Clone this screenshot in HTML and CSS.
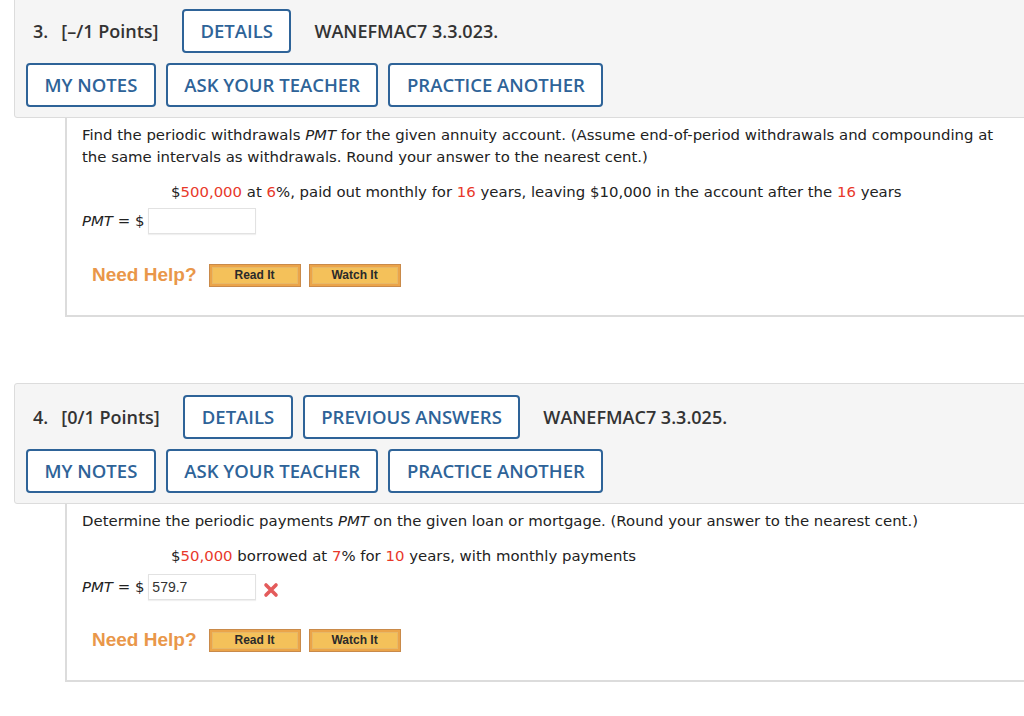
FILE: index.html
```html
<!DOCTYPE html>
<html lang="en">
<head>
<meta charset="utf-8">
<title>Questions</title>
<link rel="stylesheet" href="styles.css">
</head>
<body>
<div class="panel panel-first">
  <div class="head">
    <div class="row">
      <span class="qtitle"><span class="qnum">3.</span>[–/1 Points]</span>
      <button class="btn">DETAILS</button>
      <span class="qcode">WANEFMAC7 3.3.023.</span>
    </div>
    <div class="row">
      <button class="btn">MY NOTES</button>
      <button class="btn">ASK YOUR TEACHER</button>
      <button class="btn">PRACTICE ANOTHER</button>
    </div>
  </div>
  <div class="content">
    <p class="prompt">Find the periodic withdrawals <i>PMT</i> for the given annuity account. (Assume end-of-period withdrawals and compounding at the same intervals as withdrawals. Round your answer to the nearest cent.)</p>
    <p class="given">$<span class="red">500,000</span> at <span class="red">6</span>%, paid out monthly for <span class="red">16</span> years, leaving $10,000 in the account after the <span class="red">16</span> years</p>
    <div class="answer">
      <span class="label"><i>PMT</i> = $</span>
      <span class="field"></span>
    </div>
    <div class="help">
      <span class="need">Need Help?</span>
      <button class="hbtn">Read It</button>
      <button class="hbtn">Watch It</button>
    </div>
  </div>
</div>

<div class="panel panel-next">
  <div class="head">
    <div class="row">
      <span class="qtitle"><span class="qnum">4.</span>[0/1 Points]</span>
      <button class="btn">DETAILS</button>
      <button class="btn">PREVIOUS ANSWERS</button>
      <span class="qcode">WANEFMAC7 3.3.025.</span>
    </div>
    <div class="row">
      <button class="btn">MY NOTES</button>
      <button class="btn">ASK YOUR TEACHER</button>
      <button class="btn">PRACTICE ANOTHER</button>
    </div>
  </div>
  <div class="content content-2">
    <p class="prompt">Determine the periodic payments <i>PMT</i> on the given loan or mortgage. (Round your answer to the nearest cent.)</p>
    <p class="given">$<span class="red">50,000</span> borrowed at <span class="red">7</span>% for <span class="red">10</span> years, with monthly payments</p>
    <div class="answer">
      <span class="label"><i>PMT</i> = $</span>
      <span class="field">579.7</span>
      <svg class="wrong" width="16" height="16" viewBox="0 0 16 16" aria-hidden="true">
        <path d="M3 3 L13 13 M13 3 L3 13" stroke="#e45b5b" stroke-width="3.6" stroke-linecap="round"/>
      </svg>
    </div>
    <div class="help">
      <span class="need">Need Help?</span>
      <button class="hbtn">Read It</button>
      <button class="hbtn">Watch It</button>
    </div>
  </div>
</div>
</body>
</html>
```

FILE: styles.css
```css
html, body {
  margin: 0;
  padding: 0;
  overflow: hidden;
  background: #ffffff;
}

body {
  font-family: "DejaVu Sans", Verdana, sans-serif;
  color: #222;
}

.panel {
  margin-left: 14px;
  width: 1040px;
}

.panel-first {
  margin-top: -3px;
}

.panel-next {
  margin-top: 66px;
}

.head {
  background: #f5f5f5;
  border: 1px solid #dcdcdc;
  border-radius: 3px;
  padding: 11px 0 10px 11px;
  display: flex;
  flex-direction: column;
  gap: 10px;
}

.row {
  display: flex;
  align-items: center;
  gap: 10px;
  height: 44px;
}

.qtitle,
.qcode {
  font-family: "Open Sans", sans-serif;
  font-weight: 600;
  font-size: 18px;
  color: #333;
}

.qtitle {
  padding-left: 7px;
  padding-right: 13.5px;
}

.qnum {
  margin-right: 13px;
}

.qcode {
  margin-left: 13px;
}

.btn {
  box-sizing: border-box;
  height: 44px;
  padding: 0 16.5px;
  border: 2px solid #2e6398;
  border-radius: 4px;
  background: #ffffff;
  color: #2e6398;
  font-family: "Open Sans", sans-serif;
  font-weight: 600;
  font-size: 18.5px;
  line-height: 38px;
  cursor: pointer;
}

.content {
  margin-left: 51px;
  border-left: 2px solid #dcdcdc;
  border-bottom: 2px solid #dcdcdc;
  padding: 6px 0 28px 15px;
  font-size: 14.9px;
  line-height: 22px;
}

.prompt {
  margin: 0;
  width: 930px;
}

.given {
  margin: 13px 0 0 0;
  padding-left: 89px;
}

.red {
  color: #e8382a;
}

.answer {
  display: flex;
  align-items: center;
  margin-top: 5px;
  height: 26px;
}

.content-2 .answer {
  margin-top: 7px;
}

.label {
  margin-right: 4px;
}

.field {
  box-sizing: border-box;
  width: 108px;
  height: 26px;
  border: 1px solid #e2e2e2;
  box-shadow: 0 1px 1px rgba(0, 0, 0, 0.06);
  background: #fff;
  font-family: "Liberation Sans", Arial, sans-serif;
  font-size: 14px;
  line-height: 24px;
  padding-left: 3px;
  color: #333;
}

.wrong {
  margin-left: 7px;
  margin-top: 6px;
}

.help {
  display: flex;
  align-items: center;
  margin-top: 29px;
  padding-left: 10px;
  height: 24px;
}

.content-2 .help {
  margin-top: 28px;
}

.need {
  font-family: "Liberation Sans", Arial, sans-serif;
  font-weight: bold;
  font-size: 19px;
  color: #e9974a;
  margin-right: 12px;
}

.hbtn {
  box-sizing: border-box;
  width: 92px;
  height: 23px;
  margin-right: 8px;
  padding: 0;
  border: 1px solid #c98a4a;
  background: #f4c15a;
  box-shadow: inset 0 0 0 2px #eba449, inset 0 0 0 3px #e7b868;
  font-family: "Liberation Sans", Arial, sans-serif;
  font-weight: bold;
  font-size: 12px;
  color: #2a2a2a;
  cursor: pointer;
}
```
